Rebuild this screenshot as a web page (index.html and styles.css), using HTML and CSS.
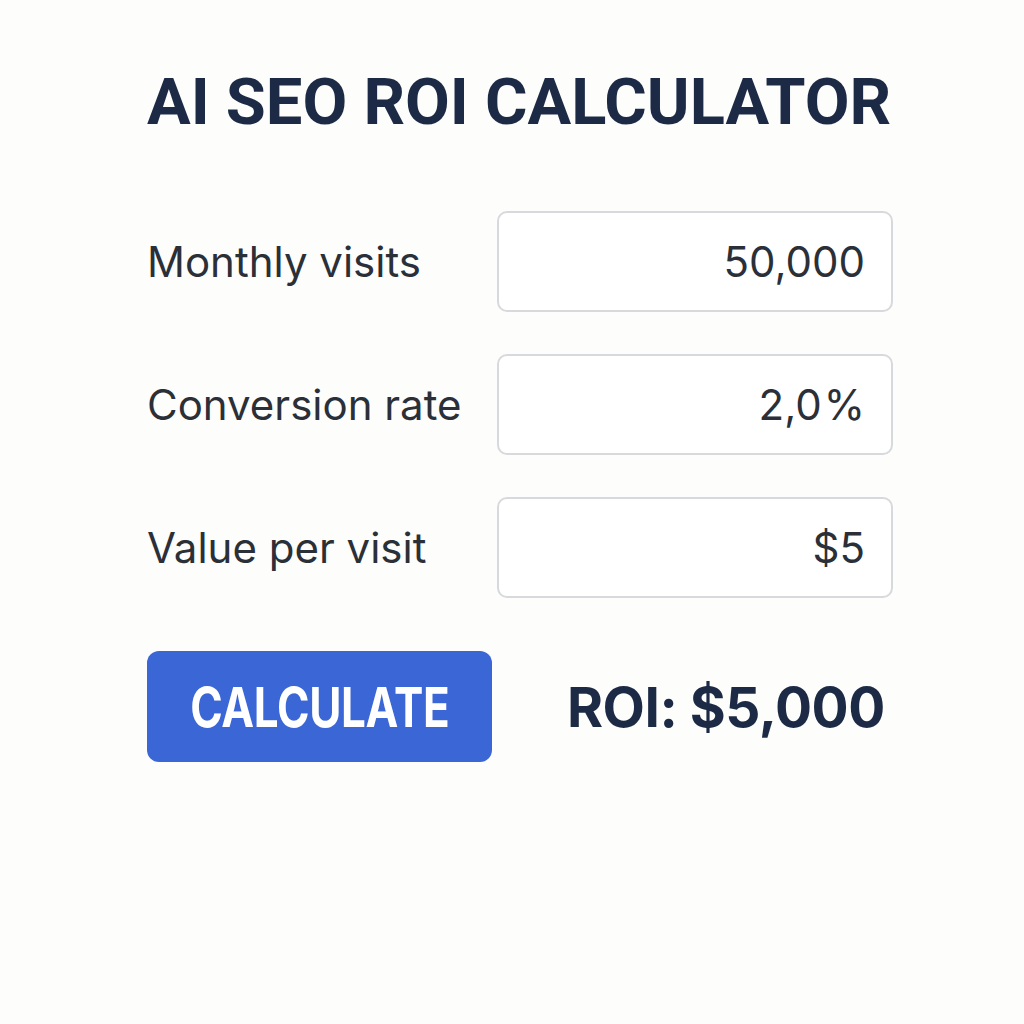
FILE: index.html
```html
<!DOCTYPE html>
<html>
<head>
<meta charset="utf-8">
<link rel="stylesheet" href="styles.css">
</head>
<body>
<main class="calc">
  <h1 class="title">AI SEO ROI CALCULATOR</h1>
  <div class="rows">
    <div class="row">
      <label class="label">Monthly visits</label>
      <div class="field">50,000</div>
    </div>
    <div class="row">
      <label class="label">Conversion rate</label>
      <div class="field">2,0<span class="pct">%</span></div>
    </div>
    <div class="row">
      <label class="label">Value per visit</label>
      <div class="field">$5</div>
    </div>
  </div>
  <div class="actions">
    <button class="btn"><span class="btn-text">CALCULATE</span></button>
    <div class="roi">ROI: $5,000</div>
  </div>
</main>
</body>
</html>
```
FILE: styles.css
```css
html, body {
  margin: 0;
  padding: 0;
  background: #fdfdfc;
}
body {
  font-family: Inter, "Noto Sans", sans-serif;
  color: #1e2a44;
}
.calc {
  width: 746px;
  margin-left: 147px;
  padding-top: 62px;
  display: flex;
  flex-direction: column;
}
.title {
  margin: 0;
  font-family: Roboto, Inter, sans-serif;
  font-size: 65px;
  font-weight: 700;
  line-height: 80px;
  white-space: nowrap;
  color: #1c2a45;
}
.rows {
  margin-top: 69px;
  display: flex;
  flex-direction: column;
  gap: 42px;
}
.row {
  display: flex;
  align-items: center;
  justify-content: space-between;
}
.label {
  font-size: 42px;
  color: #2b3038;
  font-weight: 400;
}
.field {
  box-sizing: border-box;
  width: 396px;
  height: 101px;
  border: 2px solid #d7d9dd;
  border-radius: 10px;
  background: #fff;
  display: flex;
  align-items: center;
  justify-content: flex-end;
  padding-right: 26px;
  font-size: 42px;
  color: #2b3038;
}
.pct {
  margin-left: 2px;
}
.actions {
  margin-top: 53px;
  display: flex;
  align-items: center;
}
.btn {
  flex: none;
  width: 345px;
  height: 111px;
  border: none;
  border-radius: 12px;
  background: #3b66d6;
  color: #fff;
  font-family: Inter, "Noto Sans", sans-serif;
  font-size: 55px;
  font-weight: 700;
  padding: 0;
  display: flex;
  align-items: center;
  justify-content: center;
}
.btn-text {
  display: inline-block;
  transform: scaleX(0.8);
  letter-spacing: -0.5px;
}
.roi {
  margin-left: 75px;
  font-size: 55px;
  font-weight: 700;
  letter-spacing: -0.5px;
  white-space: nowrap;
  color: #1c2a45;
}
```
